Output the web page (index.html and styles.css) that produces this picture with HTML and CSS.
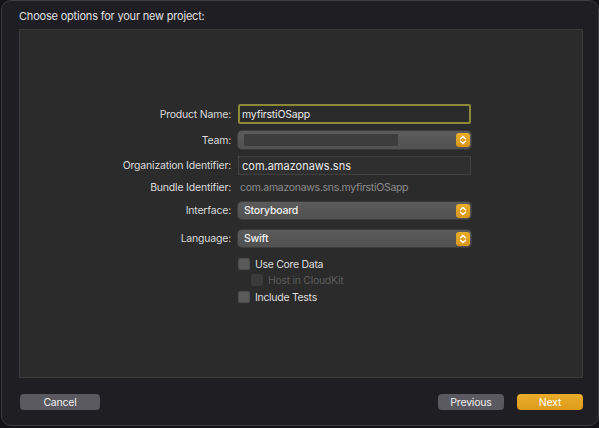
FILE: index.html
```html
<!DOCTYPE html>
<html lang="en">
<head>
<meta charset="UTF-8">
<meta name="viewport" content="width=device-width, initial-scale=1.0">
<title>New Project</title>
<link rel="stylesheet" href="styles.css">
</head>
<body>

<div class="window">
  <div class="title">Choose options for your new project:</div>

  <div class="panel">
    <div class="form">
      <div class="row r_product">
        <label>Product Name:</label>
        <div class="field focus">myfirstiOSapp</div>
      </div>
      <div class="row r_team">
        <label>Team:</label>
        <div class="popup"><span class="blur"></span><span class="stepper"><svg viewBox="0 0 14 14" width="14" height="14"><path d="M4.5 5.8 7 3.5 9.5 5.8M4.5 8.2 7 10.5 9.5 8.2" fill="none" stroke="#fff" stroke-width="1.3" stroke-linecap="round" stroke-linejoin="round"/></svg></span></div>
      </div>
      <div class="row r_org">
        <label>Organization Identifier:</label>
        <div class="field">com.amazonaws.sns</div>
      </div>
      <div class="row r_bundle">
        <label>Bundle Identifier:</label>
        <div class="static">com.amazonaws.sns.myfirstiOSapp</div>
      </div>
      <div class="row r_iface">
        <label>Interface:</label>
        <div class="popup"><span class="value">Storyboard</span><span class="stepper"><svg viewBox="0 0 14 14" width="14" height="14"><path d="M4.5 5.8 7 3.5 9.5 5.8M4.5 8.2 7 10.5 9.5 8.2" fill="none" stroke="#fff" stroke-width="1.3" stroke-linecap="round" stroke-linejoin="round"/></svg></span></div>
      </div>
      <div class="row r_lang">
        <label>Language:</label>
        <div class="popup"><span class="value">Swift</span><span class="stepper"><svg viewBox="0 0 14 14" width="14" height="14"><path d="M4.5 5.8 7 3.5 9.5 5.8M4.5 8.2 7 10.5 9.5 8.2" fill="none" stroke="#fff" stroke-width="1.3" stroke-linecap="round" stroke-linejoin="round"/></svg></span></div>
      </div>
      <div class="row r_core">
        <label></label>
        <div class="check"><span class="box"></span>Use Core Data</div>
      </div>
      <div class="row r_cloud">
        <label></label>
        <div class="check sub disabled"><span class="box"></span>Host in CloudKit</div>
      </div>
      <div class="row r_tests">
        <label></label>
        <div class="check"><span class="box"></span>Include Tests</div>
      </div>
    </div>
  </div>

  <div class="buttons">
    <a href="" class="btn cancel">Cancel</a>
    <div class="right">
      <a href="" class="btn prev">Previous</a>
      <a href="" class="btn next">Next</a>
    </div>
  </div>
</div>

</body>
</html>
```

FILE: styles.css
```css
* {margin:0; padding:0; box-sizing: border-box; text-decoration: none;}
html, body {width: 599px; height: 428px; overflow: hidden;}
body {background: #141417; font-family: Inter, "Noto Sans", sans-serif; font-size: 10.5px; letter-spacing: -0.2px; color: #dedede;}

.window {width: 598px; height: 426px; margin-left: 1px; background: #1f1e23; border: 1px solid #3c3b40; border-radius: 10px; display: flex; flex-direction: column;}
.title {height: 28px; padding: 8px 0 0 17px; font-size: 11px; color: #e0e0e0;}

.panel {margin: 0 15px 0 17px; height: 349px; background: #2b2b2b; border: 1px solid #3a3a3a; padding-top: 74px;}

.form {display: flex; flex-direction: column;}
.row {display: flex; align-items: center; gap: 7px;}
.row > label {width: 211px; text-align: right; color: #dadada;}
.row > div {width: 233px;}

.r_product {height: 20px;}
.r_team {height: 18px; margin-top: 7px;}
.r_org {height: 19px; margin-top: 7px;}
.r_bundle {height: 14px; margin-top: 5px;}
.r_iface {height: 17px; margin-top: 8px;}
.r_lang {height: 17px; margin-top: 11px;}
.r_core {height: 12px; margin-top: 11px;}
.r_cloud {height: 12px; margin-top: 4px;}
.r_tests {height: 12px; margin-top: 5px;}

.field {height: 100%; background: #2f2f2f; border: 1px solid #414141; padding: 0 0 0 3px; display: flex; align-items: center; color: #e8e8e8; font-size: 11px; letter-spacing: 0;}
.field.focus {border: 2px solid #8c8a36; border-radius: 2px; padding-left: 2px; background: #2a2a2a; font-size: 10.5px; letter-spacing: -0.2px;}
.static {color: #8b8b8b; padding-left: 2px; letter-spacing: -0.3px;}

.popup {height: 100%; border-radius: 4px; background: linear-gradient(#5b5b5b, #515151); box-shadow: 0 0 0 1px #3c3c3c; display: flex; align-items: center; padding: 0 1px 0 6px; color: #f0f0f0; position: relative;}
.popup .value {flex: 1; font-weight: 500;}
.popup .blur {flex: none; width: 154px; height: 12px; background: #3d3d3d; filter: blur(0.6px); margin-right: auto;}
.popup .stepper {margin-left: auto; width: 14px; height: 14px; border-radius: 3px; background: linear-gradient(#e9ae2a, #d8951a); display: flex;}

.check {display: flex; align-items: center; gap: 5px; color: #dedede; letter-spacing: -0.3px;}
.check .box {width: 12px; height: 12px; border-radius: 3px; background: #5a5a5a; box-shadow: inset 0 0 0 1px #4d4d4d;}
.check.sub {padding-left: 13px;}
.check.disabled {color: #5c5c5c;}
.check.disabled .box {background: #3b3b3b; box-shadow: none;}

.buttons {flex: 1; display: flex; justify-content: space-between; align-items: flex-start; padding: 16px 15px 0 18px;}
.buttons .right {display: flex; gap: 13px;}
.btn {height: 16px; border-radius: 4px; background: #5a595f; color: #eeeeee; display: flex; align-items: center; justify-content: center; font-size: 10.5px;}
.btn.cancel {width: 80px;}
.btn.prev {width: 66px;}
.btn.next {width: 66px; background: linear-gradient(#eaac2a, #de9b1b); color: #fff;}
```
